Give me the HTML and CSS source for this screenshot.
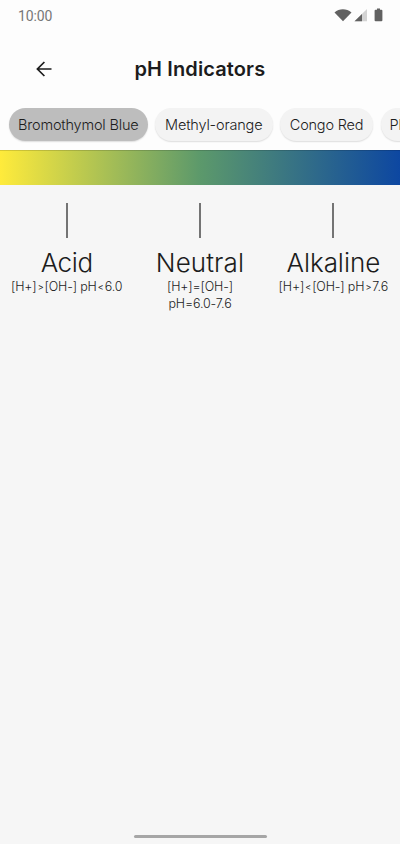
FILE: index.html
```html
<!DOCTYPE html>
<html lang="en">
<head>
<meta charset="utf-8">
<meta name="viewport" content="width=device-width, initial-scale=1">
<title>pH Indicators</title>
<link rel="stylesheet" href="styles.css">
</head>
<body>
<div class="screen">
  <header class="top">
    <div class="status">
      <span class="time">10:00</span>
      <svg class="status-icons" width="50" height="14" viewBox="0 0 50 14">
        <path d="M0.5 4.400C5.200.1 12.400.1 17.500 4.400L9 13.200Z" fill="#616161"/>
        <path d="M33 1v12.200H20.500Z" fill="#d3d3d3"/>
        <path d="M28 5.900v7.300h-7.500Z" fill="#616161"/>
        <path d="M43 .5h3v1.300h1.400q1 0 1 1v9.400q0 1-1 1h-5.800q-1 0-1-1V2.800q0-1 1-1H43Z" fill="#616161"/>
      </svg>
    </div>
    <div class="appbar">
      <svg class="back" width="16" height="16" viewBox="0 0 16 16" fill="none" stroke="#1c1c1c" stroke-width="1.700"><path d="M15.500 8H1.700M8.400 1L1.400 8l7 7"/></svg>
      <h1 class="title">pH Indicators</h1>
    </div>
    <nav class="chips">
      <span class="chip chip-blue">Bromothymol Blue</span>
      <span class="chip chip-orange">Methyl-orange</span>
      <span class="chip chip-red">Congo Red</span>
      <span class="chip chip-last">Phenolphthalein</span>
    </nav>
  </header>
  <div class="scale"></div>
  <main class="ranges">
    <section class="range">
      <div class="tick"></div>
      <h2 class="name acid">Acid</h2>
      <p class="detail">[H+]<span class="cmp">&gt;</span>[OH-] pH<span class="cmp">&lt;</span>6.0</p>
    </section>
    <section class="range">
      <div class="tick"></div>
      <h2 class="name neutral">Neutral</h2>
      <p class="detail">[H+]=[OH-]<br>pH=6.0-7.6</p>
    </section>
    <section class="range">
      <div class="tick"></div>
      <h2 class="name alkaline">Alkaline</h2>
      <p class="detail">[H+]<span class="cmp">&lt;</span>[OH-] pH<span class="cmp">&gt;</span>7.6</p>
    </section>
  </main>
  <div class="home"></div>
</div>
</body>
</html>
```
FILE: styles.css
```css
* { box-sizing: border-box; }
body { margin: 0; font-family: Inter, "Open Sans", sans-serif; color: #1c1c1c; }
.screen { width: 400px; height: 844px; overflow: hidden; background: #f6f6f6; display: flex; flex-direction: column; }
.top { height: 150px; background: #fdfdfd; flex: none; }
.status { height: 32px; padding: 0 16.500px 0 18px; display: flex; justify-content: space-between; align-items: center; }
.time { font: 14px/16px Roboto, sans-serif; color: #777; letter-spacing: -0.1px; }
.status-icons { margin-top: -2px; }
.appbar { height: 74px; display: grid; grid-template-columns: 36px 16px 1fr 52px; align-items: center; }
.back { grid-column: 2; margin-top: -1px; }
.title { grid-column: 3; margin: 0; font-size: 20px; line-height: 28px; font-weight: 600; letter-spacing: 0.120px; white-space: nowrap; padding-left: 82.500px; }
.chips { display: flex; gap: 7.500px; padding: 1.500px 0 0 9px; }
.chip { flex: none; height: 33.500px; border-radius: 17px; background: #f3f3f3; box-shadow: 0 1px 1.500px rgba(0,0,0,.13); display: flex; align-items: center; justify-content: center; font-size: 14.500px; font-weight: 300; white-space: nowrap; color: #1c1c1c; }
.chip-blue { width: 138.500px; background: #bdbdbd; letter-spacing: -0.180px; }
.chip-orange { width: 117.500px; letter-spacing: -0.180px; }
.chip-red { width: 93px; letter-spacing: -0.200px; }
.chip-last { width: 130px; justify-content: flex-start; padding-left: 9px; letter-spacing: -0.200px; }
.scale { flex: none; height: 35px; background: linear-gradient(90deg, #ffeb3b, #5c996b 50%, #0d47a1); border-top: 1px solid rgba(0,0,0,.14); background-origin: border-box; }
.ranges { display: grid; grid-template-columns: repeat(3, 1fr); padding-top: 18px; }
.range { display: flex; flex-direction: column; align-items: center; min-width: 0; }
.tick { width: 2px; height: 35px; background: #747474; }
.name { margin: 9px 0 0; font-size: 26px; line-height: 32px; font-weight: 300; white-space: nowrap; }
.acid { letter-spacing: -0.400px; }
.neutral { letter-spacing: 0.100px; }
.alkaline { letter-spacing: -0.050px; }
.detail { margin: 0; font-size: 12.500px; line-height: 16.500px; font-weight: 300; text-align: center; white-space: nowrap; letter-spacing: -0.150px; }
.cmp { display: inline-block; width: 8px; font-size: 9px; font-weight: 400; line-height: 1; vertical-align: 1px; }
.home { width: 133px; height: 3px; border-radius: 2px; background: #a6a6a6; margin: auto auto 6px; flex: none; }
```
